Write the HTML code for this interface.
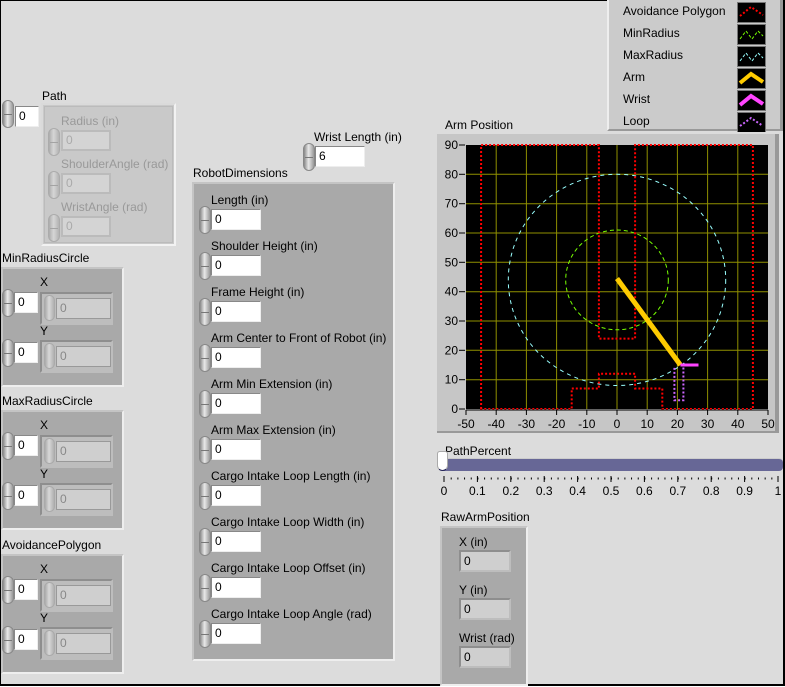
<!DOCTYPE html>
<html><head><meta charset="utf-8"><style>
*{box-sizing:border-box;margin:0;padding:0}
body{width:785px;height:687px;background:#fff;position:relative;overflow:hidden;font-family:"Liberation Sans",sans-serif;font-size:12px;color:#000}
#frame{position:absolute;left:0;top:0;width:785px;height:686px;border:1px solid #000;border-width:1px 2px 2px 1px;background:#dcdcdc}
.a{position:absolute}
.l{position:absolute;white-space:nowrap;font-size:12px;line-height:14px}
.sp{position:absolute;width:12px;height:28px;border-radius:6px;background:linear-gradient(90deg,#888,#e8e8e8 45%,#999);border:1px solid #888}
.sp:after{content:"";position:absolute;left:1px;right:1px;top:13px;height:1px;background:#777}
.fs{position:absolute;left:2px;top:1px;width:11px;height:26px;border-radius:6px;background:linear-gradient(90deg,#aaa,#d8d8d8 45%,#b0b0b0);border:1px solid #aaa}
.wb{position:absolute;width:50px;height:21px;background:#fff;border:1px solid #888;border-right-color:#eee;border-bottom-color:#eee;padding-left:3px;line-height:19px;font-size:12px}
.cl{position:absolute;background:#a9a9a9;border-right:2px solid #eee;border-bottom:2px solid #eee;border-top:2px solid #c4c4c4;border-left:2px solid #c4c4c4}
.gb{position:absolute;background:#cfcfcf;border:2px solid #8e8e8e;border-right-color:#bdbdbd;border-bottom-color:#bdbdbd;padding-left:3px;line-height:16px;color:#777;font-size:12px}
.ib{position:absolute;left:14px;top:4px;width:55px;height:21px;background:#cfcfcf;border:1px solid #999;padding-left:3px;line-height:19px;color:#888}
.dis{color:#999}
</style></head><body>
<div id="frame"></div>

<!-- Path -->
<div class="l" style="left:42px;top:89px">Path</div>
<div class="sp" style="left:2px;top:100px"></div>
<div class="wb" style="left:15px;top:106px;width:24px">0</div>
<div class="a" style="left:41px;top:103px;width:135px;height:143px;background:#c9c9c9;border:2px solid #dadada;border-right-color:#f2f2f2;border-bottom-color:#f2f2f2"></div>
<div class="a" style="left:44px;top:106px;width:129px;height:137px;border:1px solid #bbb"></div>
<div class="l dis" style="left:61px;top:114px">Radius (in)</div>
<div class="sp" style="left:48px;top:128px;opacity:.45"></div>
<div class="gb" style="left:61px;top:130px;width:50px;height:21px;background:#d4d4d4;border-color:#bbb;color:#aaa">0</div>
<div class="l dis" style="left:61px;top:157px">ShoulderAngle (rad)</div>
<div class="sp" style="left:48px;top:171px;opacity:.45"></div>
<div class="gb" style="left:61px;top:173px;width:50px;height:21px;background:#d4d4d4;border-color:#bbb;color:#aaa">0</div>
<div class="l dis" style="left:61px;top:200px">WristAngle (rad)</div>
<div class="sp" style="left:48px;top:214px;opacity:.45"></div>
<div class="gb" style="left:61px;top:216px;width:50px;height:21px;background:#d4d4d4;border-color:#bbb;color:#aaa">0</div>

<!-- MinRadiusCircle -->
<div class="l" style="left:2px;top:251px">MinRadiusCircle</div>
<div class="cl" style="left:1px;top:267px;width:123px;height:120px"></div>
<div class="l" style="left:40px;top:275px">X</div>
<div class="sp" style="left:2px;top:289px"></div>
<div class="wb" style="left:14px;top:292px;width:24px">0</div>
<div class="gb" style="left:40px;top:292px;width:73px;height:33px;background:#bdbdbd"><div class="fs"></div><div class="ib">0</div></div>
<div class="l" style="left:40px;top:324px">Y</div>
<div class="sp" style="left:2px;top:339px"></div>
<div class="wb" style="left:14px;top:342px;width:24px">0</div>
<div class="gb" style="left:40px;top:340px;width:73px;height:33px;background:#bdbdbd"><div class="fs"></div><div class="ib">0</div></div>

<!-- MaxRadiusCircle -->
<div class="l" style="left:2px;top:394px">MaxRadiusCircle</div>
<div class="cl" style="left:1px;top:410px;width:123px;height:120px"></div>
<div class="l" style="left:40px;top:418px">X</div>
<div class="sp" style="left:2px;top:432px"></div>
<div class="wb" style="left:14px;top:435px;width:24px">0</div>
<div class="gb" style="left:40px;top:435px;width:73px;height:33px;background:#bdbdbd"><div class="fs"></div><div class="ib">0</div></div>
<div class="l" style="left:40px;top:467px">Y</div>
<div class="sp" style="left:2px;top:482px"></div>
<div class="wb" style="left:14px;top:485px;width:24px">0</div>
<div class="gb" style="left:40px;top:483px;width:73px;height:33px;background:#bdbdbd"><div class="fs"></div><div class="ib">0</div></div>

<!-- AvoidancePolygon -->
<div class="l" style="left:2px;top:538px">AvoidancePolygon</div>
<div class="cl" style="left:1px;top:554px;width:123px;height:120px"></div>
<div class="l" style="left:40px;top:562px">X</div>
<div class="sp" style="left:2px;top:576px"></div>
<div class="wb" style="left:14px;top:579px;width:24px">0</div>
<div class="gb" style="left:40px;top:579px;width:73px;height:33px;background:#bdbdbd"><div class="fs"></div><div class="ib">0</div></div>
<div class="l" style="left:40px;top:611px">Y</div>
<div class="sp" style="left:2px;top:626px"></div>
<div class="wb" style="left:14px;top:629px;width:24px">0</div>
<div class="gb" style="left:40px;top:627px;width:73px;height:33px;background:#bdbdbd"><div class="fs"></div><div class="ib">0</div></div>

<!-- Wrist Length -->
<div class="l" style="left:314px;top:130px">Wrist Length (in)</div>
<div class="sp" style="left:303px;top:143px"></div>
<div class="wb" style="left:315px;top:146px;width:50px">6</div>

<!-- RobotDimensions -->
<div class="l" style="left:193px;top:166px">RobotDimensions</div>
<div class="cl" style="left:192px;top:182px;width:203px;height:479px"></div>
<div class="l" style="left:211px;top:193px">Length (in)</div>
<div class="sp" style="left:199px;top:206px"></div><div class="wb" style="left:211px;top:209px">0</div>
<div class="l" style="left:211px;top:239px">Shoulder Height (in)</div>
<div class="sp" style="left:199px;top:252px"></div><div class="wb" style="left:211px;top:255px">0</div>
<div class="l" style="left:211px;top:285px">Frame Height (in)</div>
<div class="sp" style="left:199px;top:298px"></div><div class="wb" style="left:211px;top:301px">0</div>
<div class="l" style="left:211px;top:331px">Arm Center to Front of Robot (in)</div>
<div class="sp" style="left:199px;top:344px"></div><div class="wb" style="left:211px;top:347px">0</div>
<div class="l" style="left:211px;top:377px">Arm Min Extension (in)</div>
<div class="sp" style="left:199px;top:390px"></div><div class="wb" style="left:211px;top:393px">0</div>
<div class="l" style="left:211px;top:423px">Arm Max Extension (in)</div>
<div class="sp" style="left:199px;top:436px"></div><div class="wb" style="left:211px;top:439px">0</div>
<div class="l" style="left:211px;top:469px">Cargo Intake Loop Length (in)</div>
<div class="sp" style="left:199px;top:482px"></div><div class="wb" style="left:211px;top:485px">0</div>
<div class="l" style="left:211px;top:515px">Cargo Intake Loop Width (in)</div>
<div class="sp" style="left:199px;top:528px"></div><div class="wb" style="left:211px;top:531px">0</div>
<div class="l" style="left:211px;top:561px">Cargo Intake Loop Offset (in)</div>
<div class="sp" style="left:199px;top:574px"></div><div class="wb" style="left:211px;top:577px">0</div>
<div class="l" style="left:211px;top:607px">Cargo Intake Loop Angle (rad)</div>
<div class="sp" style="left:199px;top:620px"></div><div class="wb" style="left:211px;top:623px">0</div>

<!-- Legend -->
<div class="a" style="left:607px;top:0px;width:176px;height:131px;background:#cbcbcb;border-left:2px solid #eee;border-bottom:2px solid #999;border-right:3px solid #999"></div>
<div class="l" style="left:623px;top:4px">Avoidance Polygon</div>
<div class="l" style="left:623px;top:26px">MinRadius</div>
<div class="l" style="left:623px;top:48px">MaxRadius</div>
<div class="l" style="left:623px;top:70px">Arm</div>
<div class="l" style="left:623px;top:92px">Wrist</div>
<div class="l" style="left:623px;top:114px">Loop</div>
<svg class="a" style="left:737px;top:2px" width="30" height="130">
<g stroke="#777" stroke-width="1" fill="#000">
<rect x="0.5" y="0.5" width="28" height="20"/><rect x="0.5" y="22.5" width="28" height="20"/><rect x="0.5" y="44.5" width="28" height="20"/><rect x="0.5" y="66.5" width="28" height="20"/><rect x="0.5" y="88.5" width="28" height="20"/><rect x="0.5" y="110.5" width="28" height="20"/></g>
<g fill="none">
<polyline points="3,14 14,5 26,13" stroke="#f00" stroke-width="2" stroke-dasharray="2,2"/>
<polyline points="3,37 9,29 15,37 21,29 26,34" stroke="#7f0" stroke-width="1" stroke-dasharray="3,2"/>
<polyline points="3,59 9,51 15,59 21,51 26,56" stroke="#9ff" stroke-width="1" stroke-dasharray="3,2"/>
<polyline points="3,81 14,72 26,80" stroke="#fc0" stroke-width="4"/>
<polyline points="3,103 14,94 26,102" stroke="#f4f" stroke-width="4"/>
<polyline points="3,124 14,116 26,124" stroke="#c6f" stroke-width="2" stroke-dasharray="2,2"/>
</g></svg>

<!-- Arm Position graph -->
<div class="l" style="left:445px;top:118px">Arm Position</div>
<div class="a" style="left:437px;top:134px;width:342px;height:299px;background:#c6c6c6;border-right:4px solid #999;border-bottom:2px solid #999"></div>
<svg class="a" style="left:437px;top:134px" width="345" height="300" font-family="Liberation Sans" font-size="12">
<g transform="translate(29,11)">
<rect x="0" y="0" width="302" height="264" fill="#000"/>
<g stroke="#8f8f00" stroke-width="1">
<line x1="30.2" y1="0" x2="30.2" y2="264"/><line x1="60.4" y1="0" x2="60.4" y2="264"/><line x1="90.6" y1="0" x2="90.6" y2="264"/><line x1="120.8" y1="0" x2="120.8" y2="264"/><line x1="151" y1="0" x2="151" y2="264"/><line x1="181.2" y1="0" x2="181.2" y2="264"/><line x1="211.4" y1="0" x2="211.4" y2="264"/><line x1="241.6" y1="0" x2="241.6" y2="264"/><line x1="271.8" y1="0" x2="271.8" y2="264"/>
<line x1="0" y1="29.3" x2="302" y2="29.3"/><line x1="0" y1="58.7" x2="302" y2="58.7"/><line x1="0" y1="88" x2="302" y2="88"/><line x1="0" y1="117.3" x2="302" y2="117.3"/><line x1="0" y1="146.7" x2="302" y2="146.7"/><line x1="0" y1="176" x2="302" y2="176"/><line x1="0" y1="205.3" x2="302" y2="205.3"/><line x1="0" y1="234.7" x2="302" y2="234.7"/>
</g>
<ellipse cx="151" cy="134.9" rx="108.7" ry="105.6" fill="none" stroke="#9ff" stroke-width="1" stroke-dasharray="4,4"/>
<ellipse cx="151" cy="134.9" rx="51.3" ry="49.9" fill="none" stroke="#7f0" stroke-width="1" stroke-dasharray="4,3"/>
<polygon points="15.1,264 15.1,0 132.9,0 132.9,193.6 169.1,193.6 169.1,0 286.9,0 286.9,264 196.3,264 196.3,243.5 169.1,243.5 169.1,228.8 132.9,228.8 132.9,243.5 105.7,243.5 105.7,264" fill="none" stroke="#f00" stroke-width="2" stroke-dasharray="2,2"/>
<polyline points="208.4,222.9 208.4,255.2 217.4,255.2 217.4,220" fill="none" stroke="#c6f" stroke-width="2" stroke-dasharray="2,2"/>
<line x1="151" y1="133.5" x2="214.4" y2="220" stroke="#fc0" stroke-width="5"/>
<line x1="214.4" y1="220" x2="232.5" y2="220" stroke="#f4f" stroke-width="3"/>
</g>
<g stroke="#000" stroke-width="1">
<line x1="22" y1="11" x2="28" y2="11"/><line x1="22" y1="40.3" x2="28" y2="40.3"/><line x1="22" y1="69.7" x2="28" y2="69.7"/><line x1="22" y1="99" x2="28" y2="99"/><line x1="22" y1="128.3" x2="28" y2="128.3"/><line x1="22" y1="157.7" x2="28" y2="157.7"/><line x1="22" y1="187" x2="28" y2="187"/><line x1="22" y1="216.3" x2="28" y2="216.3"/><line x1="22" y1="245.7" x2="28" y2="245.7"/><line x1="22" y1="275" x2="28" y2="275"/>
</g>
<g text-anchor="end" fill="#000">
<text x="21" y="15">90</text><text x="21" y="44.3">80</text><text x="21" y="73.7">70</text><text x="21" y="103">60</text><text x="21" y="132.3">50</text><text x="21" y="161.7">40</text><text x="21" y="191">30</text><text x="21" y="220.3">20</text><text x="21" y="249.7">10</text><text x="21" y="279">0</text>
</g>
<g stroke="#000"><line x1="29" y1="276" x2="331" y2="276"/>
<line x1="29" y1="276" x2="29" y2="281"/><line x1="59.2" y1="276" x2="59.2" y2="281"/><line x1="89.4" y1="276" x2="89.4" y2="281"/><line x1="119.6" y1="276" x2="119.6" y2="281"/><line x1="149.8" y1="276" x2="149.8" y2="281"/><line x1="180" y1="276" x2="180" y2="281"/><line x1="210.2" y1="276" x2="210.2" y2="281"/><line x1="240.4" y1="276" x2="240.4" y2="281"/><line x1="270.6" y1="276" x2="270.6" y2="281"/><line x1="300.8" y1="276" x2="300.8" y2="281"/><line x1="331" y1="276" x2="331" y2="281"/></g>
<g text-anchor="middle">
<text x="29" y="294">-50</text><text x="59.2" y="294">-40</text><text x="89.4" y="294">-30</text><text x="119.6" y="294">-20</text><text x="149.8" y="294">-10</text><text x="180" y="294">0</text><text x="210.2" y="294">10</text><text x="240.4" y="294">20</text><text x="270.6" y="294">30</text><text x="300.8" y="294">40</text><text x="331" y="294">50</text>
</g>
</svg>

<!-- PathPercent slider -->
<div class="l" style="left:445px;top:444px">PathPercent</div>
<div class="a" style="left:440px;top:458px;width:343px;height:13px;background:#676796;border-radius:4px;border-top:1px solid #ccc"></div>
<div class="a" style="left:437px;top:451px;width:11px;height:20px;background:#fff;border-radius:3px 3px 6px 6px;border:1px solid #aaa;border-bottom-color:#225"></div>
<svg class="a" style="left:438px;top:474px" width="347" height="24" font-family="Liberation Sans" font-size="12">
<g stroke="#000">
<line x1="6" y1="2" x2="6" y2="8"/><line x1="39.4" y1="2" x2="39.4" y2="8"/><line x1="72.8" y1="2" x2="72.8" y2="8"/><line x1="106.2" y1="2" x2="106.2" y2="8"/><line x1="139.6" y1="2" x2="139.6" y2="8"/><line x1="173" y1="2" x2="173" y2="8"/><line x1="206.4" y1="2" x2="206.4" y2="8"/><line x1="239.8" y1="2" x2="239.8" y2="8"/><line x1="273.2" y1="2" x2="273.2" y2="8"/><line x1="306.6" y1="2" x2="306.6" y2="8"/><line x1="340" y1="2" x2="340" y2="8"/>
</g>
<g stroke="#000" stroke-dasharray="1,5.68"><line x1="12.7" y1="4" x2="340" y2="4"/><line x1="12.7" y1="5" x2="340" y2="5"/></g>
<g text-anchor="middle">
<text x="6" y="21">0</text><text x="39.4" y="21">0.1</text><text x="72.8" y="21">0.2</text><text x="106.2" y="21">0.3</text><text x="139.6" y="21">0.4</text><text x="173" y="21">0.5</text><text x="206.4" y="21">0.6</text><text x="239.8" y="21">0.7</text><text x="273.2" y="21">0.8</text><text x="306.6" y="21">0.9</text><text x="340" y="21">1</text>
</g></svg>

<!-- RawArmPosition -->
<div class="l" style="left:441px;top:510px">RawArmPosition</div>
<div class="cl" style="left:440px;top:526px;width:88px;height:160px"></div>
<div class="l" style="left:459px;top:535px">X (in)</div>
<div class="gb" style="left:459px;top:550px;width:52px;height:22px;color:#000;line-height:18px">0</div>
<div class="l" style="left:459px;top:583px">Y (in)</div>
<div class="gb" style="left:459px;top:598px;width:52px;height:22px;color:#000;line-height:18px">0</div>
<div class="l" style="left:459px;top:631px">Wrist (rad)</div>
<div class="gb" style="left:459px;top:646px;width:52px;height:22px;color:#000;line-height:18px">0</div>
</body></html>
